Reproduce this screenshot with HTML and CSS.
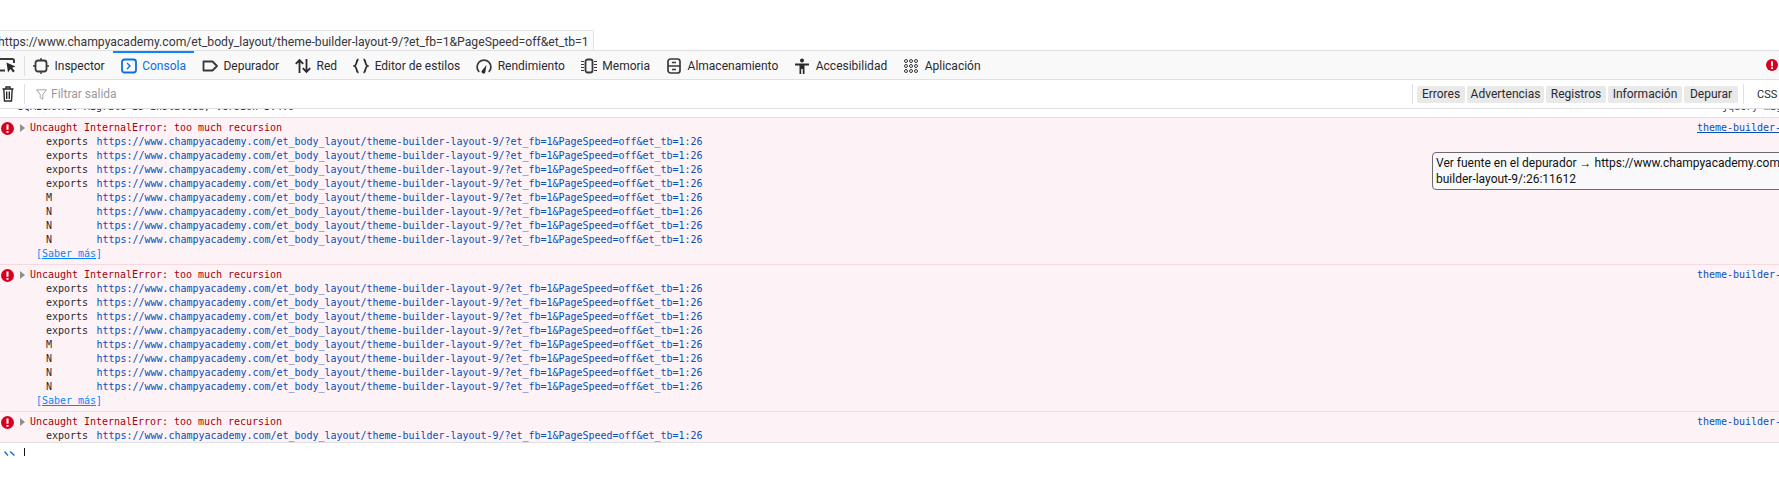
FILE: index.html
```html
<!DOCTYPE html>
<html lang="es">
<head>
<meta charset="utf-8">
<title>Consola</title>
<link rel="stylesheet" href="styles.css">
</head>
<body>
<div class="top-space">
  <div class="url-box"><span class="url-text">https://www.champyacademy.com/et_body_layout/theme-builder-layout-9/?et_fb=1&amp;PageSpeed=off&amp;et_tb=1</span></div>
</div>
<div class="tabs">
  <svg class="picker" viewBox="0 0 16 16"><path d="M0 1h12.500a1.500 1.500 0 0 1 1.500 1.500V5M0 12.500h5" fill="none" stroke="#38383d" stroke-width="2"/><path d="M6.500 4.500l9 4-3.400 1.300 2.700 3.300-1.700 1.400-2.600-3.400L8 14.500z" fill="#2a2a2e"/></svg>
  <span class="tab-sep"></span>
  <div class="tab"><svg class="ic" viewBox="0 0 16 16"><rect x="2.500" y="2.500" width="11" height="11" rx="2.500" fill="none" stroke="#38383d" stroke-width="1.800"/><path d="M8 0v2.500M8 13.500V16M0 8h2.500M13.500 8H16" stroke="#38383d" stroke-width="1.400"/></svg><span>Inspector</span></div>
  <div class="tab active"><svg class="ic" viewBox="0 0 16 16"><rect x="1" y="1.500" width="14" height="13" rx="2.500" fill="none" stroke="#0a6ee0" stroke-width="1.800"/><path d="M6 5l3 3-3 3" fill="none" stroke="#0a6ee0" stroke-width="1.400"/></svg><span>Consola</span></div>
  <div class="tab"><svg class="ic" viewBox="0 0 16 16"><path d="M1.500 3.500h9L15 8l-4.500 4.500h-9z" fill="none" stroke="#38383d" stroke-width="1.800" stroke-linejoin="round"/></svg><span>Depurador</span></div>
  <div class="tab"><svg class="ic" viewBox="0 0 16 16"><path d="M4.500 15V2M.8 5.800l3.700-3.800 3.700 3.800M11.500 1v13M7.800 10.200l3.700 3.800 3.700-3.800" fill="none" stroke="#2a2a2e" stroke-width="1.800"/></svg><span>Red</span></div>
  <div class="tab"><svg class="ic" viewBox="0 0 16 16"><path d="M5.500 1.500C2.800 1.500 4.500 7 1.500 8c3 1 1.300 6.500 4 6.500M10.500 1.500c2.700 0 1 5.500 4 6.500-3 1-1.300 6.500-4 6.500" fill="none" stroke="#2a2a2e" stroke-width="1.800"/></svg><span>Editor de estilos</span></div>
  <div class="tab"><svg class="ic" viewBox="0 0 16 16"><path d="M3.200 14A6.900 6.900 0 1 1 12.800 14" fill="none" stroke="#38383d" stroke-width="1.700"/><path d="M6 12.500a1.900 1.900 0 1 0 3.300 1.800L10.500 7z" fill="#2a2a2e"/></svg><span>Rendimiento</span></div>
  <div class="tab"><svg class="ic" viewBox="0 0 16 16"><rect x="4.500" y="1.500" width="7" height="13" rx="2" fill="none" stroke="#38383d" stroke-width="1.800"/><path d="M0 3.500h3M0 6.500h3M0 9.500h3M0 12.500h3M13 3.500h3M13 6.500h3M13 9.500h3M13 12.500h3" stroke="#38383d" stroke-width="1.100"/></svg><span>Memoria</span></div>
  <div class="tab"><svg class="ic" viewBox="0 0 16 16"><rect x="2" y="1" width="12" height="14" rx="2.500" fill="none" stroke="#38383d" stroke-width="1.700"/><path d="M2 8h12M6 4.500h4M6 11.500h4" stroke="#38383d" stroke-width="1.300"/></svg><span>Almacenamiento</span></div>
  <div class="tab"><svg class="ic" viewBox="0 0 16 16"><circle cx="8" cy="2.500" r="2" fill="#2a2a2e"/><path d="M1 5.500h14v2h-4.500V16H8.800v-5H7.200v5H5.500V7.500H1z" fill="#2a2a2e"/></svg><span>Accesibilidad</span></div>
  <div class="tab"><svg class="ic" viewBox="0 0 16 16"><g fill="none" stroke="#38383d" stroke-width="1"><circle cx="3" cy="3" r="1.500"/><circle cx="8" cy="3" r="1.500"/><circle cx="13" cy="3" r="1.500"/><circle cx="3" cy="8" r="1.500"/><circle cx="8" cy="8" r="1.500"/><circle cx="13" cy="8" r="1.500"/><circle cx="3" cy="13" r="1.500"/><circle cx="8" cy="13" r="1.500"/><circle cx="13" cy="13" r="1.500"/></g></svg><span>Aplicación</span></div>
  <div class="tabs-end"><svg class="err" viewBox="0 0 12 12"><circle cx="6" cy="6" r="6" fill="#d70022"/><path d="M6 2.200v5M6 8.300v1.600" stroke="#fff" stroke-width="1.900"/></svg></div>
</div>
<div class="filter">
  <svg class="trash" viewBox="0 0 12 16"><path d="M.5 3h11M4 3V1h4v2M1.800 3l.7 12h7l.7-12M4.700 5.500V13M7.300 5.500V13" fill="none" stroke="#2a2a2e" stroke-width="1.400"/></svg>
  <span class="tab-sep"></span>
  <svg class="funnel" viewBox="0 0 11 11"><path d="M.5.800h10L6.800 5.500v4.700L4.200 8.700V5.500z" fill="none" stroke="#a3a3a6" stroke-width="1"/></svg>
  <span class="filter-text">Filtrar salida</span>
  <div class="filter-btns">
    <span class="tab-sep"></span>
    <span class="fbtn f-err">Errores</span>
    <span class="fbtn f-warn">Advertencias</span>
    <span class="fbtn f-log">Registros</span>
    <span class="fbtn f-info">Información</span>
    <span class="fbtn f-debug">Depurar</span>
    <span class="tab-sep sep-css"></span>
    <span class="fplain">CSS</span>
  </div>
</div>
<div class="output">
  <div class="partial"><span class="partial-text">JQMIGRATE: Migrate is installed, version 3.4.0</span><a class="source partial-src">jquery-migrate.min.js</a></div>
  <div class="error">
    <div class="err-head"><svg class="err" viewBox="0 0 12 12"><circle cx="6" cy="6" r="6" fill="#d70022"/><path d="M6 2.200v5M6 8.300v1.600" stroke="#fff" stroke-width="1.900"/></svg><i class="arrow"></i><span class="msg">Uncaught InternalError: too much recursion</span><a class="source under">theme-builder-layout-9/:26:11612</a></div>
    <div class="frame"><span class="fn">exports</span><a class="loc">https://www.champyacademy.com/et_body_layout/theme-builder-layout-9/?et_fb=1&amp;PageSpeed=off&amp;et_tb=1:26</a></div>
    <div class="frame"><span class="fn">exports</span><a class="loc">https://www.champyacademy.com/et_body_layout/theme-builder-layout-9/?et_fb=1&amp;PageSpeed=off&amp;et_tb=1:26</a></div>
    <div class="frame"><span class="fn">exports</span><a class="loc">https://www.champyacademy.com/et_body_layout/theme-builder-layout-9/?et_fb=1&amp;PageSpeed=off&amp;et_tb=1:26</a></div>
    <div class="frame"><span class="fn">exports</span><a class="loc">https://www.champyacademy.com/et_body_layout/theme-builder-layout-9/?et_fb=1&amp;PageSpeed=off&amp;et_tb=1:26</a></div>
    <div class="frame"><span class="fn">M</span><a class="loc">https://www.champyacademy.com/et_body_layout/theme-builder-layout-9/?et_fb=1&amp;PageSpeed=off&amp;et_tb=1:26</a></div>
    <div class="frame"><span class="fn">N</span><a class="loc">https://www.champyacademy.com/et_body_layout/theme-builder-layout-9/?et_fb=1&amp;PageSpeed=off&amp;et_tb=1:26</a></div>
    <div class="frame"><span class="fn">N</span><a class="loc">https://www.champyacademy.com/et_body_layout/theme-builder-layout-9/?et_fb=1&amp;PageSpeed=off&amp;et_tb=1:26</a></div>
    <div class="frame"><span class="fn">N</span><a class="loc">https://www.champyacademy.com/et_body_layout/theme-builder-layout-9/?et_fb=1&amp;PageSpeed=off&amp;et_tb=1:26</a></div>
    <div class="learn">[<a>Saber más</a>]</div>
  </div>
  <div class="error">
    <div class="err-head"><svg class="err" viewBox="0 0 12 12"><circle cx="6" cy="6" r="6" fill="#d70022"/><path d="M6 2.200v5M6 8.300v1.600" stroke="#fff" stroke-width="1.900"/></svg><i class="arrow"></i><span class="msg">Uncaught InternalError: too much recursion</span><a class="source">theme-builder-layout-9/:26:11612</a></div>
    <div class="frame"><span class="fn">exports</span><a class="loc">https://www.champyacademy.com/et_body_layout/theme-builder-layout-9/?et_fb=1&amp;PageSpeed=off&amp;et_tb=1:26</a></div>
    <div class="frame"><span class="fn">exports</span><a class="loc">https://www.champyacademy.com/et_body_layout/theme-builder-layout-9/?et_fb=1&amp;PageSpeed=off&amp;et_tb=1:26</a></div>
    <div class="frame"><span class="fn">exports</span><a class="loc">https://www.champyacademy.com/et_body_layout/theme-builder-layout-9/?et_fb=1&amp;PageSpeed=off&amp;et_tb=1:26</a></div>
    <div class="frame"><span class="fn">exports</span><a class="loc">https://www.champyacademy.com/et_body_layout/theme-builder-layout-9/?et_fb=1&amp;PageSpeed=off&amp;et_tb=1:26</a></div>
    <div class="frame"><span class="fn">M</span><a class="loc">https://www.champyacademy.com/et_body_layout/theme-builder-layout-9/?et_fb=1&amp;PageSpeed=off&amp;et_tb=1:26</a></div>
    <div class="frame"><span class="fn">N</span><a class="loc">https://www.champyacademy.com/et_body_layout/theme-builder-layout-9/?et_fb=1&amp;PageSpeed=off&amp;et_tb=1:26</a></div>
    <div class="frame"><span class="fn">N</span><a class="loc">https://www.champyacademy.com/et_body_layout/theme-builder-layout-9/?et_fb=1&amp;PageSpeed=off&amp;et_tb=1:26</a></div>
    <div class="frame"><span class="fn">N</span><a class="loc">https://www.champyacademy.com/et_body_layout/theme-builder-layout-9/?et_fb=1&amp;PageSpeed=off&amp;et_tb=1:26</a></div>
    <div class="learn">[<a>Saber más</a>]</div>
  </div>
  <div class="error last">
    <div class="err-head"><svg class="err" viewBox="0 0 12 12"><circle cx="6" cy="6" r="6" fill="#d70022"/><path d="M6 2.200v5M6 8.300v1.600" stroke="#fff" stroke-width="1.900"/></svg><i class="arrow"></i><span class="msg">Uncaught InternalError: too much recursion</span><a class="source">theme-builder-layout-9/:26:11612</a></div>
    <div class="frame"><span class="fn">exports</span><a class="loc">https://www.champyacademy.com/et_body_layout/theme-builder-layout-9/?et_fb=1&amp;PageSpeed=off&amp;et_tb=1:26</a></div>
  </div>
</div>
<div class="prompt">
  <svg class="chev" viewBox="0 0 11 5"><path d="M.5.500L4 4.500M6 .5l4.500 4" fill="none" stroke="#0a6ee0" stroke-width="1.400"/></svg><span class="caret"></span>
</div>
<div class="tip">Ver fuente en el depurador → https://www.champyacademy.com/et_body_layout/theme-<br>builder-layout-9/:26:11612</div>
</body>
</html>
```
FILE: styles.css
```css
* { box-sizing: border-box; }
html, body { margin: 0; padding: 0; }
body {
  width: 1779px;
  height: 496px;
  overflow: hidden;
  position: relative;
  background: #fff;
  font-family: Roboto, sans-serif;
  font-size: 12px;
  color: #2a2a2e;
}
.top-space { height: 50px; padding-top: 30px; }
.url-box {
  width: 594px;
  height: 20px;
  background: #fbfbfb;
  border: 1px solid #e6e6e6;
  border-bottom: 0;
  border-left: 0;
  overflow: hidden;
  white-space: nowrap;
  padding-top: 3px;
  line-height: 16px;
  font-size: 12.2px;
  color: #38383d;
}
.url-text { display: block; margin-left: -2px; }
.tabs {
  height: 30px;
  display: flex;
  align-items: center;
  background: #f9f9fa;
  border-top: 1px solid #e0e0e2;
  border-bottom: 1px solid #e0e0e2;
}
.picker { width: 16px; height: 16px; flex: none; margin-top: 2px; }
.tab-sep { width: 1px; height: 20px; background: #e0e0e2; flex: none; margin-left: 8px; }
.tabs > .tab-sep { margin-top: 2px; }
.tab {
  display: flex;
  align-items: center;
  gap: 5.5px;
  height: 100%;
  flex: none;
  padding: 2px 8px 0;
  white-space: nowrap;
  position: relative;
}
.tab.active { color: #0a6ee0; }
.tab.active::before {
  content: "";
  position: absolute;
  left: 0;
  right: 0;
  top: 0;
  height: 2px;
  background: #0a84ff;
}
.ic { width: 16px; height: 16px; flex: none; }
.tabs-end { margin-left: auto; padding-right: 1px; display: flex; align-items: center; }
.err { width: 12px; height: 12px; flex: none; display: block; }
.filter {
  height: 29px;
  display: flex;
  align-items: center;
  border-bottom: 1px solid #e0e0e2;
}
.trash { width: 12px; height: 16px; flex: none; margin-left: 2px; }
.filter > .tab-sep { margin-left: 10px; }
.funnel { width: 11px; height: 11px; flex: none; margin-left: 11px; }
.filter-text { margin-left: 4px; color: #9a9a9e; }
.filter-btns { margin-left: auto; display: flex; align-items: center; height: 100%; }
.fbtn {
  height: 17px;
  background: #e9e9ea;
  border-radius: 2px;
  line-height: 17px;
  text-align: center;
  margin-left: 2px;
  flex: none;
  white-space: nowrap;
}
.f-err { width: 48px; margin-left: 4px; }
.f-warn { width: 77px; }
.f-log { width: 60px; }
.f-info { width: 74px; }
.f-debug { width: 54px; }
.filter-btns .sep-css { margin-left: 5px; }
.fplain { margin-left: 13px; width: 22px; white-space: nowrap; font-size: 11px; }
.output { height: 334px; overflow: hidden; border-bottom: 1px solid #e0e0e2; }
.partial {
  height: 8px;
  position: relative;
  overflow: hidden;
  font: 10px/14px "DejaVu Sans Mono", monospace;
  letter-spacing: -0.02px;
  white-space: nowrap;
}
.partial-text { display: block; margin-top: -9px; margin-left: 18px; }
.error {
  background: #fdf2f5;
  border-top: 1px solid #f6d9de;
  height: 147px;
  padding-top: 3px;
  font: 10px/14px "DejaVu Sans Mono", monospace;
  letter-spacing: -0.02px;
  white-space: nowrap;
  color: #2a2a2e;
}
.error.last { height: 31px; }
.err-head {
  display: flex;
  align-items: center;
  height: 14px;
  padding-left: 1px;
  position: relative;
}
.err-head .err { width: 13px; height: 13px; }
.arrow {
  width: 0;
  height: 0;
  margin-left: 6px;
  border-left: 5px solid #8f8f92;
  border-top: 4px solid transparent;
  border-bottom: 4px solid transparent;
  flex: none;
}
.msg { margin-left: 5px; color: #a4000f; }
.source {
  position: absolute;
  left: 1697px;
  color: #0a4fb5;
}
.partial .partial-src { left: 1722px; top: -9px; }
.source.under { text-decoration: underline; }
.frame { height: 14px; padding-left: 46px; display: flex; }
.fn { width: 50.5px; flex: none; }
.loc { color: #0a4fb5; }
.learn { height: 14px; padding-left: 36px; color: #0a84ff; }
.learn a { text-decoration: underline; }
.prompt { display: flex; align-items: flex-start; height: 53px; padding: 5px 0 0 4px; }
.chev { width: 11px; height: 5px; flex: none; margin-top: 3px; }
.caret { width: 1px; height: 8px; background: #111; margin-left: 9px; }
.tip {
  position: absolute;
  left: 1432px;
  top: 152px;
  width: 520px;
  height: 38px;
  padding: 3px 3px;
  background: #f9f9fb;
  border: 1px solid #6b6b70;
  border-radius: 4px;
  font-size: 12px;
  line-height: 15.500px;
  color: #111;
  white-space: nowrap;
}
```
